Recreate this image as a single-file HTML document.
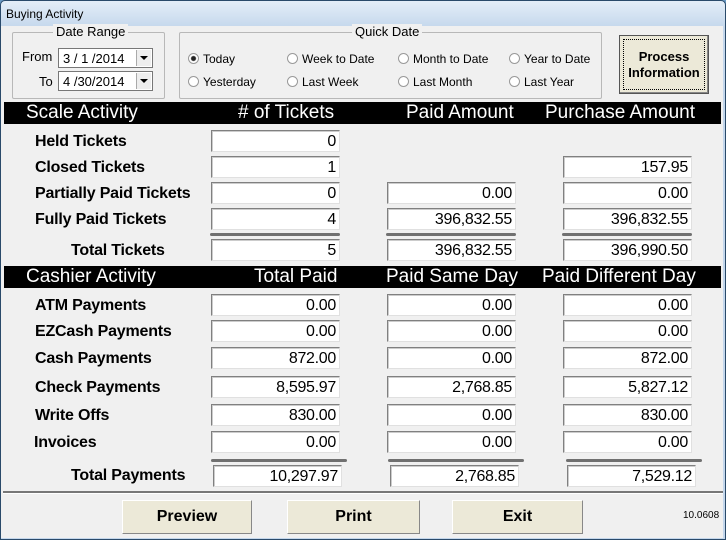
<html><head><style>
body{margin:0;width:726px;height:540px;background:#6a9ac4;font-family:"Liberation Sans",Arial,sans-serif;position:relative;overflow:hidden}
.win{position:absolute;left:0;top:0;width:724px;height:538px;border:1px solid #2a4a6a;border-radius:5px 5px 0 0;background:linear-gradient(#e4eef8,#c4d7ec 27px,#c4d7ec);}
.a{position:absolute}
.t{font-size:12px}
.lab{position:absolute;font-weight:bold;font-size:16px;left:35px;letter-spacing:-0.2px}
.f{position:absolute;height:20px;background:#fff;border:1px solid;border-color:#808080 #e0e0e0 #e0e0e0 #808080;box-shadow:inset 1px 1px 0 #ccc;font-size:16px;text-align:right;line-height:21px;padding-right:3px;box-sizing:content-box;width:124px;letter-spacing:-0.3px}
.bar{position:absolute;left:4px;width:717px;height:22px;background:#000;color:#fff;font-size:19px;line-height:22px}
.bar span{position:absolute}
.sep{position:absolute;height:3px;background:#707070;border-radius:2px;width:130px}
.grp{position:absolute;border:1px solid #b8b8b8;border-radius:2px}
.gt{position:absolute;background:#f0f0f0;font-size:13px;padding:0 3px;top:-9px}
.rad{position:absolute;font-size:12px}
.rad:before{content:"";display:inline-block;width:9px;height:9px;border:1px solid #999;border-radius:50%;background:#fff;margin-right:4px;vertical-align:-1px}
.rad.on:before{background:radial-gradient(#222 2px,#fff 3px)}
.dd{position:absolute;width:95px;height:20px;border:1px solid #777;background:#fff;font-size:13px;line-height:20px;padding-left:4px;box-sizing:border-box}
.dd i{position:absolute;right:1px;top:1px;width:14px;height:16px;background:#eee;border-left:1px solid #aaa}
.dd i:after{content:"";position:absolute;left:3px;top:6px;border:4px solid transparent;border-top:4px solid #000}
.btn{position:absolute;top:500px;height:32px;background:#ece9d8;border:1px solid;border-color:#fff #888 #888 #fff;font-weight:bold;font-size:16px;text-align:center;line-height:32px}
</style></head><body>
<div class="win"></div>
<div class="a t" style="left:6px;top:7px">Buying Activity</div>
<div class="a" style="left:1px;top:26px;width:722px;height:512px;background:#f0f0f0"></div>
<div class="grp" style="left:12px;top:32px;width:151px;height:65px"><div class="gt" style="left:40px">Date Range</div></div>
<div class="a" style="left:22px;top:49px;font-size:13px">From</div>
<div class="a" style="left:39px;top:74px;font-size:13px">To</div>
<div class="dd" style="top:48px;left:58px">3 / 1 /2014<i></i></div>
<div class="dd" style="top:71px;left:58px">4 /30/2014<i></i></div>
<div class="grp" style="left:179px;top:32px;width:421px;height:65px"><div class="gt" style="left:172px">Quick Date</div></div>
<div class="rad on" style="left:188px;top:52px">Today</div>
<div class="rad" style="left:287px;top:52px">Week to Date</div>
<div class="rad" style="left:398px;top:52px">Month to Date</div>
<div class="rad" style="left:509px;top:52px">Year to Date</div>
<div class="rad" style="left:188px;top:75px">Yesterday</div>
<div class="rad" style="left:287px;top:75px">Last Week</div>
<div class="rad" style="left:398px;top:75px">Last Month</div>
<div class="rad" style="left:509px;top:75px">Last Year</div>
<div class="a" style="left:619px;top:35px;width:88px;height:57px;background:#ece9d8;border:1px solid #555;box-shadow:inset -1px -1px 0 #888;"><div style="position:absolute;left:3px;top:3px;right:3px;bottom:3px;border:1px dotted #000;font-weight:bold;font-size:13px;text-align:center;line-height:16px;padding-top:9px">Process<br>Information</div></div>
<div class="bar" style="top:102px"><span style="left:22px">Scale Activity</span><span style="left:234px">#  of Tickets</span><span style="left:402px">Paid Amount</span><span style="left:541px">Purchase Amount</span></div>
<div class="lab" style="top:133px">Held Tickets</div>
<div class="lab" style="top:159px">Closed Tickets</div>
<div class="lab" style="top:185px">Partially Paid Tickets</div>
<div class="lab" style="top:211px">Fully Paid Tickets</div>
<div class="lab" style="top:242px;left:71px">Total Tickets</div>
<div class="f" style="left:211px;top:130px">0</div>
<div class="f" style="left:211px;top:156px">1</div>
<div class="f" style="left:563px;top:156px">157.95</div>
<div class="f" style="left:211px;top:182px">0</div>
<div class="f" style="left:387px;top:182px">0.00</div>
<div class="f" style="left:563px;top:182px">0.00</div>
<div class="f" style="left:211px;top:208px">4</div>
<div class="f" style="left:387px;top:208px">396,832.55</div>
<div class="f" style="left:563px;top:208px">396,832.55</div>
<div class="sep" style="left:210px;top:233px"></div><div class="sep" style="left:386px;top:233px"></div><div class="sep" style="left:562px;top:233px"></div>
<div class="f" style="left:211px;top:239px">5</div>
<div class="f" style="left:387px;top:239px">396,832.55</div>
<div class="f" style="left:563px;top:239px">396,990.50</div>
<div class="bar" style="top:266px"><span style="left:22px">Cashier Activity</span><span style="left:250px">Total Paid</span><span style="left:382px">Paid Same Day</span><span style="left:538px">Paid Different Day</span></div>
<div class="lab" style="top:297px">ATM Payments</div>
<div class="lab" style="top:323px">EZCash Payments</div>
<div class="lab" style="top:350px">Cash Payments</div>
<div class="lab" style="top:379px">Check Payments</div>
<div class="lab" style="top:407px">Write Offs</div>
<div class="lab" style="top:434px;left:34px">Invoices</div>
<div class="lab" style="top:467px;left:71px">Total Payments</div>
<div class="f" style="left:211px;top:294px">0.00</div><div class="f" style="left:387px;top:294px">0.00</div><div class="f" style="left:563px;top:294px">0.00</div>
<div class="f" style="left:211px;top:320px">0.00</div><div class="f" style="left:387px;top:320px">0.00</div><div class="f" style="left:563px;top:320px">0.00</div>
<div class="f" style="left:211px;top:347px">872.00</div><div class="f" style="left:387px;top:347px">0.00</div><div class="f" style="left:563px;top:347px">872.00</div>
<div class="f" style="left:211px;top:376px">8,595.97</div><div class="f" style="left:387px;top:376px">2,768.85</div><div class="f" style="left:563px;top:376px">5,827.12</div>
<div class="f" style="left:211px;top:404px">830.00</div><div class="f" style="left:387px;top:404px">0.00</div><div class="f" style="left:563px;top:404px">830.00</div>
<div class="f" style="left:211px;top:431px">0.00</div><div class="f" style="left:387px;top:431px">0.00</div><div class="f" style="left:563px;top:431px">0.00</div>
<div class="sep" style="left:211px;top:459px;width:136px"></div><div class="sep" style="left:388px;top:459px;width:136px"></div><div class="sep" style="left:566px;top:459px;width:136px"></div>
<div class="f" style="left:213px;top:465px">10,297.97</div><div class="f" style="left:390px;top:465px">2,768.85</div><div class="f" style="left:567px;top:465px">7,529.12</div>
<div class="a" style="left:3px;top:491px;width:720px;height:2px;background:#777;border-bottom:1px solid #fff"></div>
<div class="btn" style="left:122px;width:128px">Preview</div>
<div class="btn" style="left:287px;width:131px">Print</div>
<div class="btn" style="left:452px;width:129px">Exit</div>
<div class="a" style="left:683px;top:510px;font-size:10px">10.0608</div>
</body></html>
